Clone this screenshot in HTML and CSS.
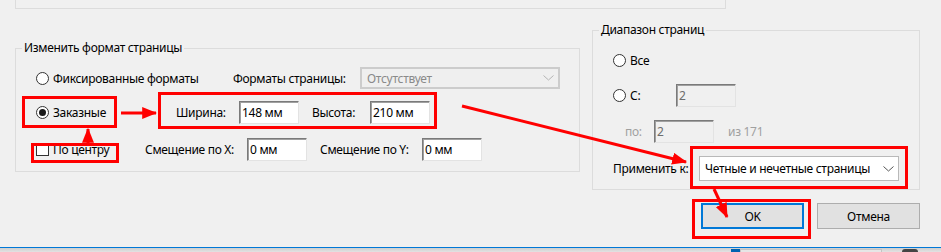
FILE: index.html
```html
<!DOCTYPE html>
<html lang="ru">
<head>
  <meta charset="UTF-8">
  <title>Формат страницы</title>
<link rel="stylesheet" href="styles.css">
</head>
<body>
<div class="window">
  <div class="top-box"></div>

  <div class="main">
    <div class="group format">
      <div class="group-title">Изменить формат страницы</div>

      <div class="row">
        <label class="opt w-fixed"><span class="radio"></span>Фиксированные форматы</label>
        <span class="lbl w-formats">Форматы страницы:</span>
        <div class="combo disabled">
          <span class="combo-text">Отсутствует</span>
          <span class="combo-btn"><svg width="11" height="6" viewBox="0 0 11 6"><polyline points="0.5,0.5 5.5,5 10.5,0.5" fill="none" stroke="#b4b4b4" stroke-width="1"/></svg></span>
        </div>
      </div>

      <div class="row row-size">
        <label class="opt w-custom"><span class="radio on"></span>Заказные</label>
        <span class="lbl w-width">Ширина:</span>
        <input class="field" value="148 мм">
        <span class="lbl w-height gap">Высота:</span>
        <input class="field" value="210 мм">
      </div>

      <div class="row row-offset">
        <label class="opt w-center"><span class="check"></span>По центру</label>
        <span class="lbl w-offset">Смещение по X:</span>
        <input class="field" value="0 мм">
        <span class="lbl w-offset gap">Смещение по Y:</span>
        <input class="field" value="0 мм">
      </div>
    </div>

    <div class="side">
      <div class="group range">
        <div class="group-title">Диапазон страниц</div>

        <div class="row row-all">
          <label class="opt"><span class="radio"></span>Все</label>
        </div>

        <div class="row row-from">
          <label class="opt w-from"><span class="radio"></span>С:</label>
          <input class="field off" value="2" disabled>
        </div>

        <div class="row row-to">
          <span class="lbl dim w-to">по:</span>
          <input class="field off" value="2" disabled>
          <span class="lbl dim total">из 171</span>
        </div>

        <div class="row row-apply">
          <span class="lbl w-apply">Применить к:</span>
          <div class="combo">
            <span class="combo-text">Четные и нечетные страницы</span>
            <span class="combo-btn"><svg width="11" height="6" viewBox="0 0 11 6"><polyline points="0.5,0.5 5.5,5 10.5,0.5" fill="none" stroke="#555" stroke-width="1"/></svg></span>
          </div>
        </div>
      </div>

      <div class="buttons">
        <button class="btn default">OK</button>
        <button class="btn">Отмена</button>
      </div>
    </div>
  </div>

  <div class="taskbar">
    <span class="tb-thumb"></span>
    <span class="tb-track"></span>
    <span class="tb-icon"></span>
  </div>

  <!-- red annotations drawn over the dialog -->
  <svg class="marks" width="941" height="252" viewBox="0 0 941 252">
    <defs>
      <marker id="head" markerWidth="5" markerHeight="4" refX="4.6" refY="2" orient="auto" markerUnits="strokeWidth">
        <polygon points="0,0 5,2 0,4" fill="#f00"/>
      </marker>
    </defs>
    <g fill="none" stroke="#f00" stroke-width="3">
      <rect x="23.5" y="97.5" width="92" height="29"/>
      <rect x="159.5" y="93.5" width="276" height="34"/>
      <rect x="32.5" y="144.5" width="85" height="17"/>
      <rect x="691.5" y="147.5" width="215" height="40"/>
      <rect x="693.5" y="200.5" width="116" height="37"/>
      <line x1="121" y1="113" x2="156" y2="113" marker-end="url(#head)"/>
      <line x1="88" y1="143" x2="88" y2="129" marker-end="url(#head)"/>
      <line x1="462" y1="106" x2="686" y2="162" marker-end="url(#head)"/>
      <line x1="714" y1="189" x2="727" y2="217" marker-end="url(#head)"/>
    </g>
  </svg>
</div>
</body>
</html>
```

FILE: styles.css
```css
* {
  margin: 0;
  padding: 0;
  box-sizing: border-box;
}
body {
  background: #f0f0f0;
  font-family: "Noto Sans", "Open Sans", sans-serif;
  font-size: 12px;
  letter-spacing: -0.3px;
  color: #000;
}
.window {
  position: relative;
  width: 941px;
  height: 252px;
  overflow: hidden;
  display: flex;
  flex-direction: column;
}
.top-box {
  margin-left: 15px;
  width: 711px;
  height: 9px;
  border: 1px solid #dcdcdc;
  border-top: none;
}
.main {
  flex: 1;
  display: flex;
  padding-left: 15px;
}

/* group boxes */
.group {
  border: 1px solid #dcdcdc;
}
.group-title {
  display: table;
  margin: -9px 0 0 -14px;
  padding: 0 2px;
  height: 16px;
  line-height: 16px;
  background: #f0f0f0;
}
.format {
  width: 565px;
  height: 124px;
  margin-top: 39px;
  padding-left: 20px;
}
.side {
  margin-left: 12px;
  width: 328px;
}
.range {
  height: 160px;
  margin-top: 21px;
  padding-left: 20px;
}

/* rows */
.row {
  display: flex;
  align-items: center;
  white-space: nowrap;
}
.format .row { height: 22px; margin-top: 11px; }
.format .row-size { height: 23px; margin-top: 12px; }
.format .row-offset { height: 23px; margin-top: 14px; }
.range .row-all { height: 20px; margin-top: 12px; }
.range .row-from { height: 23px; margin-top: 14px; }
.range .row-to { height: 23px; margin-top: 13px; padding-left: 12px; }
.range .row-apply { height: 25px; margin-top: 13px; }

.opt {
  display: flex;
  align-items: center;
}
.lbl.gap { margin-left: 13px; }
.dim { color: #a0a0a0; }
.w-fixed { width: 197px; }
.w-formats { width: 127px; }
.w-custom { width: 140px; }
.w-width { width: 63px; }
.w-height { width: 58px; }
.w-center { width: 109px; }
.w-offset { width: 102px; }
.w-from { width: 63px; }
.w-to { width: 29px; }
.w-apply { width: 86px; }
.total { margin-left: 14px; }

.radio {
  width: 13px;
  height: 13px;
  margin-right: 4px;
  border: 1px solid #333;
  border-radius: 50%;
  background: #fff;
  display: flex;
  align-items: center;
  justify-content: center;
}
.radio.on::after {
  content: "";
  width: 7px;
  height: 7px;
  border-radius: 50%;
  background: #1a1a1a;
}
.check {
  width: 13px;
  height: 13px;
  margin-right: 4px;
  border: 1px solid #333;
  background: #fff;
}

/* text fields */
.field {
  width: 60px;
  height: 23px;
  padding: 0 2px;
  font: inherit;
  letter-spacing: inherit;
  color: #000;
  background: #fff;
  border: 1px solid;
  border-color: #7a7a7a #e3e3e3 #e3e3e3 #7a7a7a;
  box-shadow: inset 1px 1px 0 #a0a0a0;
  outline: none;
}
.field.off {
  background: #f0f0f0;
  color: #6d6d6d;
}

/* drop-downs */
.combo {
  width: 200px;
  height: 25px;
  display: flex;
  align-items: center;
  background: #fff;
  border: 1px solid #b9b9b9;
}
.combo.disabled {
  height: 22px;
  background: #efefef;
  border: 2px solid #cccccc;
  color: #8a8a8a;
}
.combo-text {
  flex: 1;
  padding-left: 5px;
}
.combo-btn {
  width: 20px;
  display: flex;
  justify-content: center;
}

/* buttons */
.buttons {
  display: flex;
  justify-content: flex-end;
  gap: 13px;
  margin-top: 13px;
}
.btn {
  width: 103px;
  height: 26px;
  font: inherit;
  letter-spacing: inherit;
  color: #000;
  background: #e1e1e1;
  border: 1px solid #adadad;
}
.btn.default {
  border: 2px solid #0078d7;
}

.taskbar {
  height: 5px;
  display: flex;
  align-items: flex-end;
  padding-left: 731px;
  border-top: 1px solid #0078d7;
  background: linear-gradient(#cfcfcf, #e2e2e2);
}
.tb-thumb {
  width: 9px;
  height: 3px;
  background: #0063b1;
}
.tb-track {
  width: 142px;
  height: 3px;
  border: 1px solid #c4c4c4;
  border-bottom: none;
  background: #e6e6e6;
}
.tb-icon {
  width: 16px;
  height: 3px;
  margin-left: 20px;
  border-radius: 3px 3px 0 0;
  background: #444;
}

.marks {
  position: absolute;
  left: 0;
  top: 0;
  pointer-events: none;
}
```
